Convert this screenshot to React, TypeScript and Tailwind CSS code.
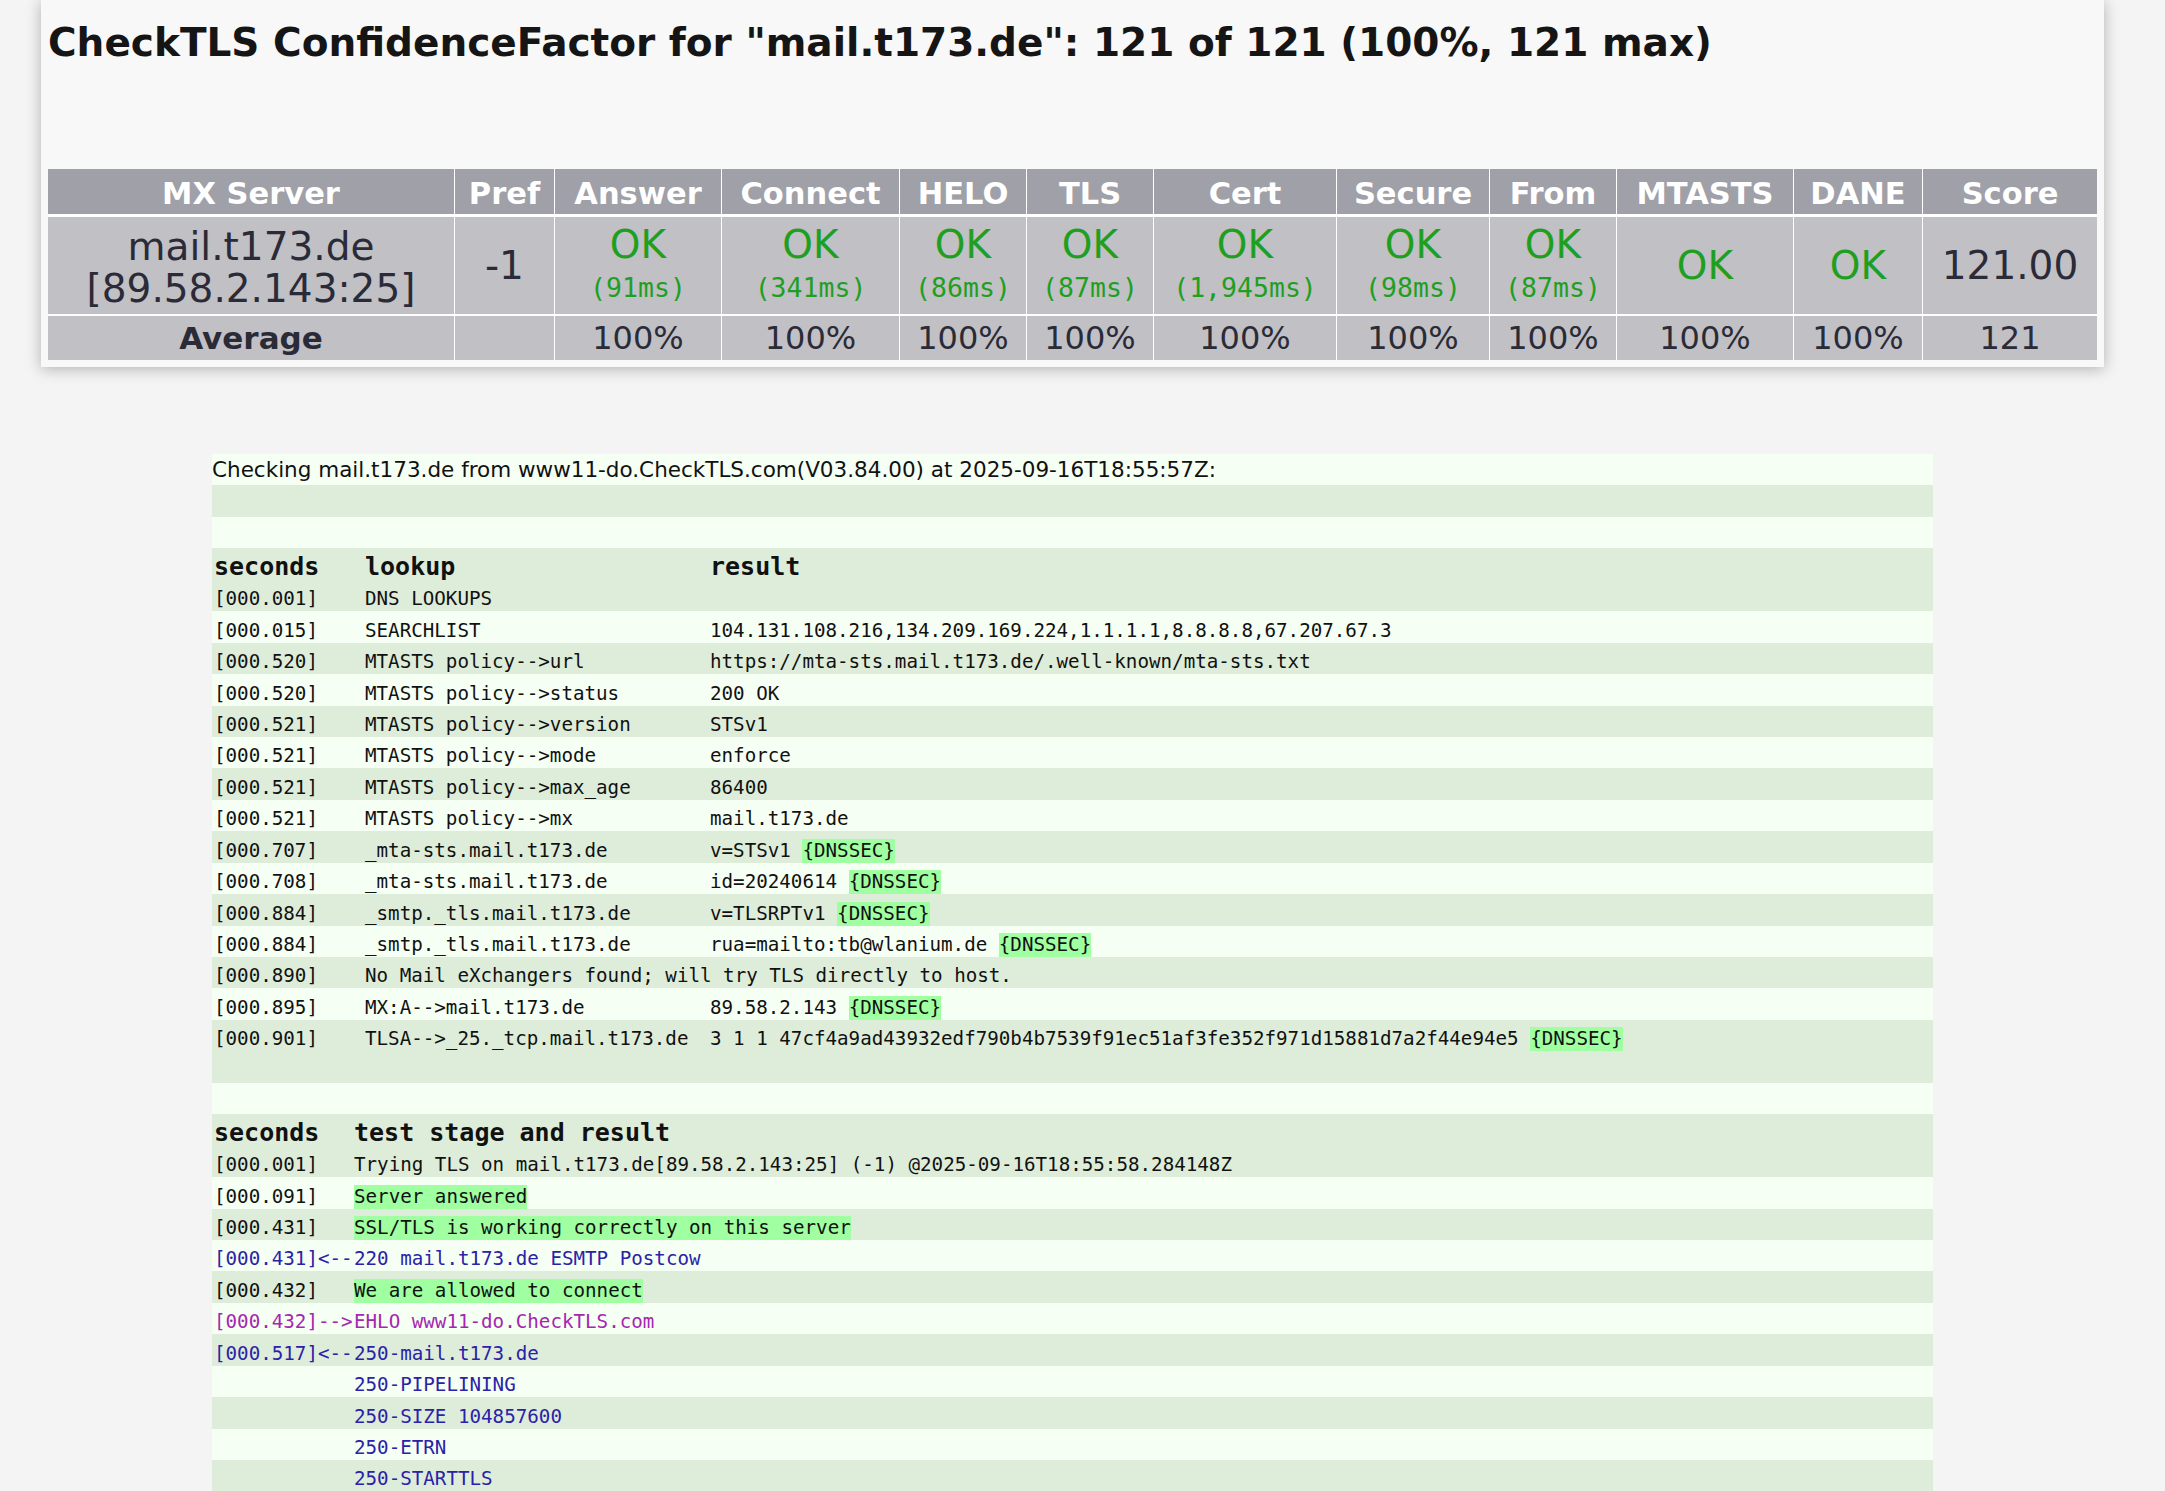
import React from "react";

const sans = "font-['DejaVu_Sans',Verdana,sans-serif]";
const mono = "font-['DejaVu_Sans_Mono',monospace]";

// column widths of the score table (1px white gap between them)
const cols =
  "grid grid-cols-[406px_99px_166px_177px_126px_126px_182px_152px_126px_176px_128px_174px] gap-x-px";

const heads = ["MX Server", "Pref", "Answer", "Connect", "HELO", "TLS", "Cert", "Secure", "From", "MTASTS", "DANE", "Score"];
const timed = ["91ms", "341ms", "86ms", "87ms", "1,945ms", "98ms", "87ms"];

type Lookup = { t: string; lookup: string; result?: string; dnssec?: boolean; span?: boolean };

const lookups: Lookup[] = [
  { t: "[000.001]", lookup: "DNS LOOKUPS" },
  { t: "[000.015]", lookup: "SEARCHLIST", result: "104.131.108.216,134.209.169.224,1.1.1.1,8.8.8.8,67.207.67.3" },
  { t: "[000.520]", lookup: "MTASTS policy-->url", result: "https://mta-sts.mail.t173.de/.well-known/mta-sts.txt" },
  { t: "[000.520]", lookup: "MTASTS policy-->status", result: "200 OK" },
  { t: "[000.521]", lookup: "MTASTS policy-->version", result: "STSv1" },
  { t: "[000.521]", lookup: "MTASTS policy-->mode", result: "enforce" },
  { t: "[000.521]", lookup: "MTASTS policy-->max_age", result: "86400" },
  { t: "[000.521]", lookup: "MTASTS policy-->mx", result: "mail.t173.de" },
  { t: "[000.707]", lookup: "_mta-sts.mail.t173.de", result: "v=STSv1", dnssec: true },
  { t: "[000.708]", lookup: "_mta-sts.mail.t173.de", result: "id=20240614", dnssec: true },
  { t: "[000.884]", lookup: "_smtp._tls.mail.t173.de", result: "v=TLSRPTv1", dnssec: true },
  { t: "[000.884]", lookup: "_smtp._tls.mail.t173.de", result: "rua=mailto:tb@wlanium.de", dnssec: true },
  { t: "[000.890]", lookup: "No Mail eXchangers found; will try TLS directly to host.", span: true },
  { t: "[000.895]", lookup: "MX:A-->mail.t173.de", result: "89.58.2.143", dnssec: true },
  {
    t: "[000.901]",
    lookup: "TLSA-->_25._tcp.mail.t173.de",
    result: "3 1 1 47cf4a9ad43932edf790b4b7539f91ec51af3fe352f971d15881d7a2f44e94e5",
    dnssec: true,
  },
];

type Stage = { t: string; dir: string; text: string; kind: "plain" | "good" | "in" | "out" };

const stages: Stage[] = [
  { t: "[000.001]", dir: "", text: "Trying TLS on mail.t173.de[89.58.2.143:25] (-1) @2025-09-16T18:55:58.284148Z", kind: "plain" },
  { t: "[000.091]", dir: "", text: "Server answered", kind: "good" },
  { t: "[000.431]", dir: "", text: "SSL/TLS is working correctly on this server", kind: "good" },
  { t: "[000.431]", dir: "<--", text: "220 mail.t173.de ESMTP Postcow", kind: "in" },
  { t: "[000.432]", dir: "", text: "We are allowed to connect", kind: "good" },
  { t: "[000.432]", dir: "-->", text: "EHLO www11-do.CheckTLS.com", kind: "out" },
  { t: "[000.517]", dir: "<--", text: "250-mail.t173.de", kind: "in" },
  { t: "", dir: "", text: "250-PIPELINING", kind: "in" },
  { t: "", dir: "", text: "250-SIZE 104857600", kind: "in" },
  { t: "", dir: "", text: "250-ETRN", kind: "in" },
  { t: "", dir: "", text: "250-STARTTLS", kind: "in" },
];

function Row({ i, children, head }: { i: number; children?: React.ReactNode; head?: boolean }) {
  const bg = i % 2 ? "bg-[#deedda]" : "bg-[#f6fff4]";
  return (
    <div className={`${bg} h-[31.45px] flex items-end whitespace-pre ${mono} ${head ? "text-[25px] font-bold leading-[27px]" : "text-[19.2px] leading-[24px]"}`}>
      {children}
    </div>
  );
}

function Dnssec() {
  return <span className="inline-block bg-[#a0ffa0] leading-[24px]">{"{DNSSEC}"}</span>;
}

function ScoreCard() {
  return (
    <div className="ml-[41px] w-[2063px] bg-[#f8f8f8] px-[7px] pb-[7px] shadow-[0_2px_14px_rgba(0,0,0,0.28)]">
      <h1 className={`${sans} pt-[23px] text-[39px] font-bold leading-[40px] text-[#151515]`}>
        CheckTLS ConfidenceFactor for "mail.t173.de": 121 of 121 (100%, 121 max)
      </h1>

      <div className={`mt-[106px] flex flex-col gap-y-[3px] bg-white ${sans} text-center`}>
        <div className={`${cols} h-[45px] bg-white`}>
          {heads.map((h) => (
            <div key={h} className="bg-[#a0a0a8] pt-[4px] text-[30.5px] font-bold leading-[41px] text-white">
              {h}
            </div>
          ))}
        </div>

        <div className={`${cols} h-[97px] text-[#2b2b38]`}>
          <div className="flex flex-col justify-center bg-[#c0c0c5] pt-[4px] text-[39px] leading-[41.7px]">
            <div>mail.t173.de</div>
            <div>[89.58.2.143:25]</div>
          </div>
          <div className="flex items-center justify-center bg-[#c0c0c5] text-[39px] leading-[44px]">-1</div>
          {timed.map((ms, n) => (
            <div key={n} className="flex flex-col items-center bg-[#c0c0c5] pt-[5.5px] text-[#1f9f1f]">
              <div className="text-[39px] leading-[44px]">OK</div>
              <div className={`${mono} mt-[6px] text-[26.5px] leading-[30px]`}>({ms})</div>
            </div>
          ))}
          <div className="flex items-center justify-center bg-[#c0c0c5] text-[39px] leading-[44px] text-[#1f9f1f]">OK</div>
          <div className="flex items-center justify-center bg-[#c0c0c5] text-[39px] leading-[44px] text-[#1f9f1f]">OK</div>
          <div className="flex items-center justify-center bg-[#c0c0c5] text-[39px] leading-[44px]">121.00</div>
        </div>

        <div className={`${cols} mt-[-1px] h-[44px] text-[32px] leading-[44px] text-[#2b2b38]`}>
          <div className="bg-[#c0c0c5] text-[31px] font-bold">Average</div>
          <div className="bg-[#c0c0c5]"></div>
          {Array.from({ length: 9 }).map((_, n) => (
            <div key={n} className="bg-[#c0c0c5]">100%</div>
          ))}
          <div className="bg-[#c0c0c5]">121</div>
        </div>
      </div>
    </div>
  );
}

function Log() {
  let i = 0;
  return (
    <div className="mt-[87px] ml-[212px] w-[1721px] text-[#111]">
      <div className={`bg-[#f6fff4] h-[31.45px] ${sans} text-[21.5px] leading-[31.45px]`}>
        Checking mail.t173.de from www11-do.CheckTLS.com(V03.84.00) at 2025-09-16T18:55:57Z:
      </div>
      <Row i={++i} />
      <Row i={++i} />

      <Row i={++i} head>
        <span className="w-[153px] pl-[2px]">seconds</span>
        <span className="w-[345px]">lookup</span>
        <span>result</span>
      </Row>
      {lookups.map((l) => (
        <Row key={++i} i={i}>
          <span className="w-[153px] shrink-0 pl-[2px]">{l.t}</span>
          {l.span ? (
            <span>{l.lookup}</span>
          ) : (
            <>
              <span className="w-[345px] shrink-0">{l.lookup}</span>
              <span>
                {l.result}
                {l.dnssec && " "}
                {l.dnssec && <Dnssec />}
              </span>
            </>
          )}
        </Row>
      ))}
      <Row i={++i} />
      <Row i={++i} />

      <Row i={++i} head>
        <span className="w-[142px] pl-[2px]">seconds</span>
        <span>test stage and result</span>
      </Row>
      {stages.map((s) => {
        const color =
          s.kind === "in" ? "text-[#2a22a8]" : s.kind === "out" ? "text-[#a626b0]" : "text-[#111]";
        return (
          <Row key={++i} i={i}>
            <span className={`w-[142px] shrink-0 pl-[2px] ${color}`}>
              {s.t ? s.t.padEnd(9, " ") : ""}
              {s.dir}
            </span>
            {s.kind === "good" ? (
              <span className="inline-block bg-[#a0ffa0] leading-[24px]">{s.text}</span>
            ) : (
              <span className={color}>{s.text}</span>
            )}
          </Row>
        );
      })}
    </div>
  );
}

export default function App() {
  return (
    <main className="h-[1491px] overflow-hidden bg-[#f4f4f4]">
      <ScoreCard />
      <Log />
    </main>
  );
}
